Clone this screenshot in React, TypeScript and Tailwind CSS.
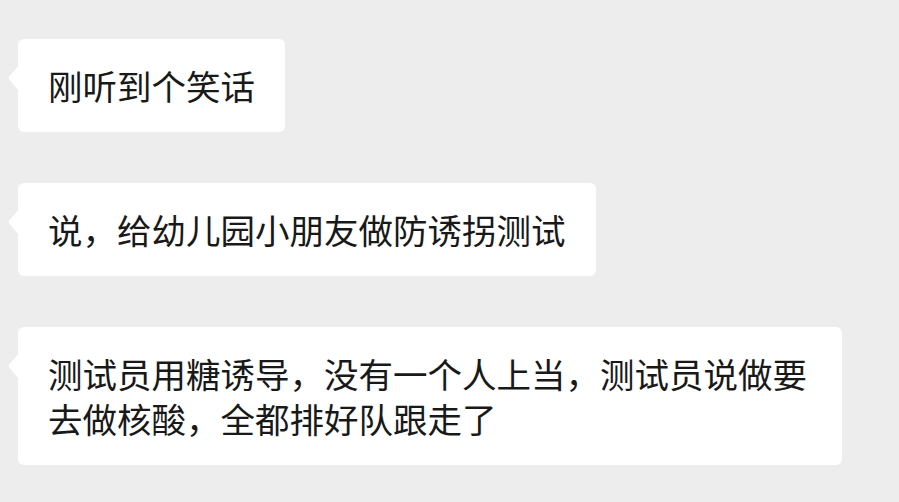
const messages = [
  "刚听到个笑话",
  "说，给幼儿园小朋友做防诱拐测试",
  "测试员用糖诱导，没有一个人上当，测试员说做要去做核酸，全都排好队跟走了",
];

function Bubble({ text }: { text: string }) {
  return (
    <div className="relative w-fit max-w-[824px] rounded-[6px] bg-white px-[30px] py-6 text-[34.5px] leading-[45px] text-[#191919]">
      <svg
        className="absolute left-[-10px] top-[26px]"
        width="11"
        height="26"
        viewBox="0 0 11 26"
      >
        <path d="M11 0 L1.2 11.6 Q0 13 1.2 14.4 L11 26 Z" fill="#ffffff" />
      </svg>
      {text}
    </div>
  );
}

export default function App() {
  return (
    <div
      className="flex min-h-[502px] w-full flex-col gap-[51px] bg-[#ededed] pl-[18px] pt-[39px]"
      style={{ fontFamily: '"Noto Sans CJK SC", "Noto Sans", sans-serif' }}
    >
      {messages.map((m) => (
        <Bubble key={m} text={m} />
      ))}
    </div>
  );
}
